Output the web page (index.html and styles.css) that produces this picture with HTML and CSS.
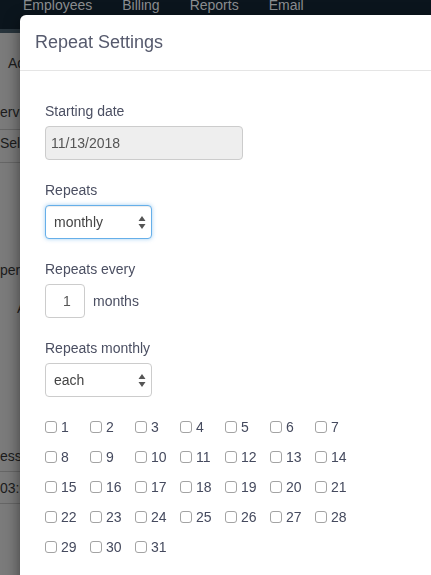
FILE: index.html
```html
<!DOCTYPE html>
<html lang="en">
<head>
<meta charset="utf-8">
<title>Repeat Settings</title>
<link rel="stylesheet" href="styles.css">
</head>
<body>
<div class="navbar">
  <ul class="nav">
    <li>Employees</li>
    <li>Billing</li>
    <li>Reports</li>
    <li>Email</li>
  </ul>
</div>
<div class="navstrip"></div>
<div class="page">
  <div class="ptxt p-add">Ad</div>
  <div class="ptxt p-serv">ervi</div>
  <div class="prule r1"></div>
  <div class="ptxt p-sel">Sele</div>
  <div class="prule r2"></div>
  <div class="ptxt p-per">per</div>
  <div class="ptxt p-a">A</div>
  <div class="ptxt p-esse">esse</div>
  <div class="prule r3"></div>
  <div class="ptxt p-time">03:0</div>
  <div class="prule r4"></div>
</div>

<div class="modal">
  <div class="modal-header">
    <h4 class="modal-title">Repeat Settings</h4>
  </div>
  <div class="modal-body">
    <div class="form-group">
      <div class="label">Starting date</div>
      <div class="control control-disabled">11/13/2018</div>
    </div>
    <div class="form-group">
      <div class="label">Repeats</div>
      <div class="select select-focus">
        <span>monthly</span>
        <svg class="arrows" width="8" height="13" viewBox="0 0 8 13"><path d="M4 0 L7.5 5 L0.5 5 Z M4 13 L7.5 8 L0.5 8 Z" fill="#555"/></svg>
      </div>
    </div>
    <div class="form-group">
      <div class="label">Repeats every</div>
      <div class="inline-row">
        <div class="control control-num">1</div>
        <span class="unit">months</span>
      </div>
    </div>
    <div class="form-group">
      <div class="label">Repeats monthly</div>
      <div class="select">
        <span>each</span>
        <svg class="arrows" width="8" height="13" viewBox="0 0 8 13"><path d="M4 0 L7.5 5 L0.5 5 Z M4 13 L7.5 8 L0.5 8 Z" fill="#555"/></svg>
      </div>
    </div>
    <div class="days">
      <label class="day"><span class="box"></span>1</label>
      <label class="day"><span class="box"></span>2</label>
      <label class="day"><span class="box"></span>3</label>
      <label class="day"><span class="box"></span>4</label>
      <label class="day"><span class="box"></span>5</label>
      <label class="day"><span class="box"></span>6</label>
      <label class="day"><span class="box"></span>7</label>
      <label class="day"><span class="box"></span>8</label>
      <label class="day"><span class="box"></span>9</label>
      <label class="day"><span class="box"></span>10</label>
      <label class="day"><span class="box"></span>11</label>
      <label class="day"><span class="box"></span>12</label>
      <label class="day"><span class="box"></span>13</label>
      <label class="day"><span class="box"></span>14</label>
      <label class="day"><span class="box"></span>15</label>
      <label class="day"><span class="box"></span>16</label>
      <label class="day"><span class="box"></span>17</label>
      <label class="day"><span class="box"></span>18</label>
      <label class="day"><span class="box"></span>19</label>
      <label class="day"><span class="box"></span>20</label>
      <label class="day"><span class="box"></span>21</label>
      <label class="day"><span class="box"></span>22</label>
      <label class="day"><span class="box"></span>23</label>
      <label class="day"><span class="box"></span>24</label>
      <label class="day"><span class="box"></span>25</label>
      <label class="day"><span class="box"></span>26</label>
      <label class="day"><span class="box"></span>27</label>
      <label class="day"><span class="box"></span>28</label>
      <label class="day"><span class="box"></span>29</label>
      <label class="day"><span class="box"></span>30</label>
      <label class="day"><span class="box"></span>31</label>
    </div>
  </div>
</div>
</body>
</html>
```

FILE: styles.css
```css
html, body {
  margin: 0;
  padding: 0;
}
body {
  font-family: "Liberation Sans", Arial, sans-serif;
  font-size: 14px;
  line-height: 20px;
  background: #7b7b7b;
  height: 575px;
  overflow: hidden;
}

/* background page (dimmed) */
.navbar {
  height: 29px;
  background: #0b151d;
  overflow: hidden;
}
.nav {
  list-style: none;
  margin: -5px 0 0 23px;
  padding: 0;
  display: flex;
  gap: 30px;
  color: #8b8e91;
  font-size: 14px;
  line-height: 20px;
}
.navstrip {
  height: 4px;
  background: #28343c;
}
.page {
  display: flex;
  flex-direction: column;
  width: 20px;
  overflow: hidden;
  color: #1c1c1c;
  white-space: nowrap;
}
.ptxt { height: 20px; }
.prule { height: 1px; background: #666; }
.p-add { margin-top: 20px; padding-left: 8px; }
.p-serv { margin-top: 29px; }
.r1 { margin-top: 7px; }
.p-sel { margin-top: 3px; }
.r2 { margin-top: 9px; }
.p-per { margin-top: 97px; }
.p-a { margin-top: 18px; padding-left: 17px; }
.p-esse { margin-top: 128px; }
.r3 { margin-top: 5px; }
.p-time { margin-top: 6px; }
.r4 { margin-top: 5px; }

/* modal */
.modal {
  position: fixed;
  top: 15px;
  left: 20px;
  width: 600px;
  height: 700px;
  background: #fff;
  border-radius: 6px;
  box-shadow: 0 5px 15px rgba(0,0,0,0.5);
  color: #4b4f62;
}
.modal-header {
  padding: 15px;
  border-bottom: 1px solid #e5e5e5;
}
.modal-title {
  margin: 0;
  font-size: 18px;
  line-height: 25px;
  font-weight: normal;
  color: #565a6d;
}
.modal-body {
  padding: 30px 25px 15px;
}
.form-group {
  margin-bottom: 20px;
}
.label {
  margin-bottom: 5px;
  height: 20px;
}
.control {
  box-sizing: border-box;
  height: 34px;
  border: 1px solid #ccc;
  border-radius: 4px;
  color: #555;
  display: flex;
  align-items: center;
}
.control-disabled {
  width: 198px;
  background: #eee;
  padding-left: 5px;
}
.control-num {
  width: 40px;
  justify-content: center;
  padding-left: 4px;
}
.inline-row {
  display: flex;
  align-items: center;
}
.unit {
  margin-left: 8px;
}
.select {
  box-sizing: border-box;
  width: 107px;
  height: 34px;
  border: 1px solid #ccc;
  border-radius: 4px;
  padding: 0 5px 0 8px;
  display: flex;
  align-items: center;
  justify-content: space-between;
  color: #444;
  background: #fff;
}
.select-focus {
  border-color: #66afe9;
  box-shadow: inset 0 1px 1px rgba(0,0,0,0.075), 0 0 4px rgba(102,175,233,0.6);
}
.arrows { display: block; }

.days {
  display: grid;
  grid-template-columns: repeat(7, 45px);
  row-gap: 10px;
}
.day {
  display: flex;
  align-items: center;
  height: 20px;
  color: #454a5e;
}
.box {
  box-sizing: border-box;
  width: 12px;
  height: 12px;
  border: 1px solid #a3a3a3;
  border-radius: 3px;
  margin-right: 4px;
  background: #fff;
}
```
